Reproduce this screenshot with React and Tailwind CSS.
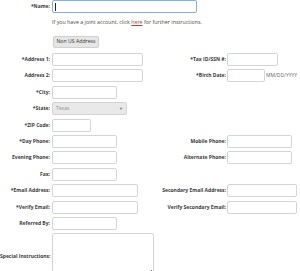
const Label = ({ children, w = 'w-[50px] mr-[2px]' }) => (
  <label className={`${w} shrink-0 text-right font-bold text-[5px] leading-none text-[#3a3a3a] whitespace-nowrap`}>
    {children}
  </label>
);

const Box = ({ w }) => (
  <input
    type="text"
    className={`${w} h-[13px] shrink-0 border border-[#d4d4d4] rounded-[2px] bg-white outline-none`}
  />
);

function Row({ left, lw, right, rw, extra, className = 'mt-[3.4px]' }) {
  return (
    <div className={`flex h-[13px] items-center ${className}`}>
      <div className="w-[150px] shrink-0 flex items-center">
        <Label>{left}</Label>
        <Box w={lw} />
      </div>
      {right && (
        <div className="flex items-center">
          <Label w="w-[76px] mr-[1px]">{right}</Label>
          <Box w={rw} />
          {extra}
        </div>
      )}
    </div>
  );
}

export default function App() {
  return (
    <div className="w-[300px] h-[271px] overflow-hidden bg-white" style={{ fontFamily: '"Open Sans", "Liberation Sans", sans-serif' }}>
      <div className="flex h-[13px] items-center">
        <Label>*Name:</Label>
        <div className="w-[145px] h-[13px] border border-[#86aee6] rounded-[2px] flex items-center pl-[2px]">
          <span className="w-px h-[8px] bg-[#222]" />
        </div>
      </div>

      <p className="mt-[6px] ml-[52px] text-[5.3px] leading-[6px] text-[#4b4b3a] whitespace-nowrap">
        If you have a joint account, click <span className="text-[#b24a2e] underline">here</span> for further instructions.
      </p>

      <button className="mt-[6px] ml-[53px] w-[46px] h-[12px] border border-[#d0d0d0] rounded-[2px] bg-[#e6e6e6] text-[5.2px] leading-none text-[#333]">
        Non US Address
      </button>

      <Row className="mt-[4px]" left="*Address 1:" lw="w-[91px]" right="*Tax ID/SSN #:" rw="w-[51px]" />
      <Row
        left="Address 2:"
        lw="w-[91px]"
        right="*Birth Date:"
        rw="w-[38px]"
        extra={<span className="ml-[1px] text-[5px] leading-none text-[#666] whitespace-nowrap">MM/DD/YYYY</span>}
      />
      <Row left="*City:" lw="w-[65px]" />

      <div className="flex h-[13px] items-center mt-[3.4px]">
        <Label>*State:</Label>
        <div className="w-[75px] h-[13px] border border-[#d4d4d4] rounded-[2px] bg-[#e9e9e9] flex items-center justify-between px-[3px]">
          <span className="text-[5px] leading-none text-[#8a8a8a]">Texas</span>
          <span className="text-[4px] leading-none text-[#777]">▼</span>
        </div>
      </div>

      <Row left="*ZIP Code:" lw="w-[39px]" />
      <Row left="*Day Phone:" lw="w-[65px]" right="Mobile Phone:" rw="w-[65px]" />
      <Row left="Evening Phone:" lw="w-[65px]" right="Alternate Phone:" rw="w-[65px]" />
      <Row left="Fax:" lw="w-[65px]" />
      <Row left="*Email Address:" lw="w-[86px]" right="Secondary Email Address:" rw="w-[70px]" />
      <Row left="*Verify Email:" lw="w-[86px]" right="Verify Secondary Email:" rw="w-[70px]" />
      <Row left="Referred By:" lw="w-[65px]" />

      <div className="flex items-center mt-[3.4px]">
        <Label>Special Instructions:</Label>
        <textarea className="w-[102px] h-[46px] shrink-0 border border-[#d4d4d4] rounded-[2px] bg-white outline-none resize" />
      </div>
    </div>
  );
}
